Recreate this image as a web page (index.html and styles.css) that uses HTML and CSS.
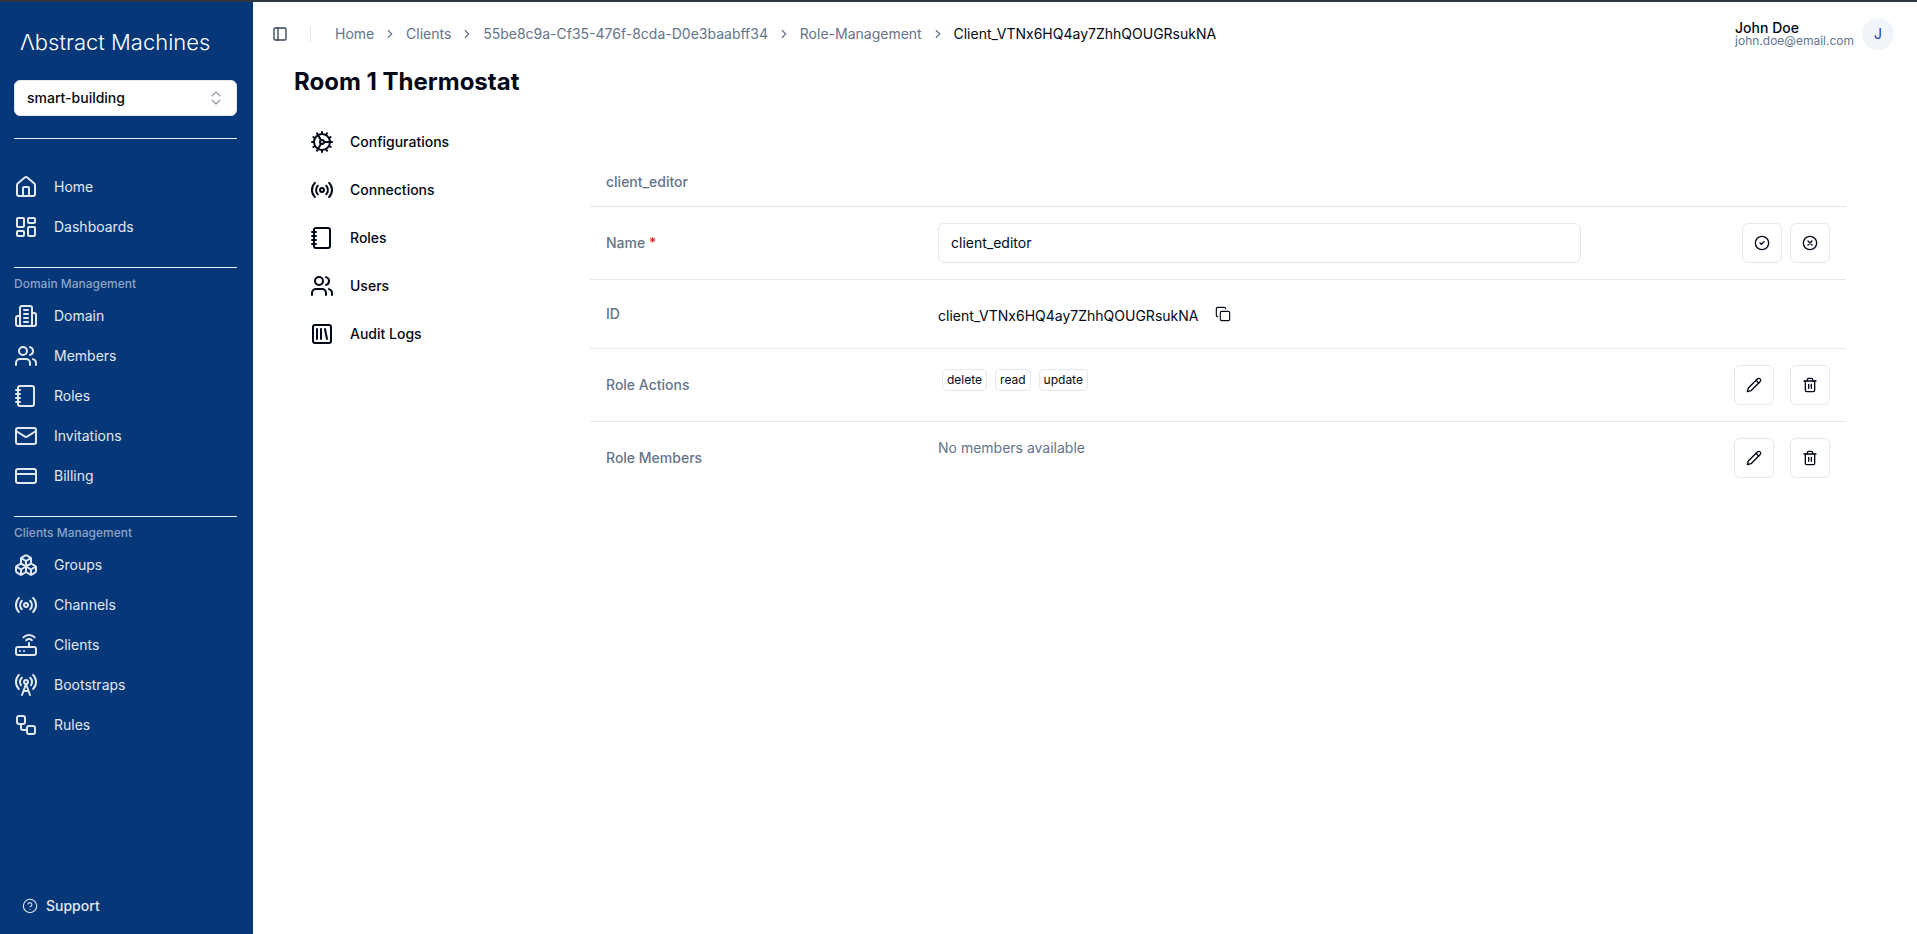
FILE: index.html
```html
<!DOCTYPE html>
<html lang="en">

<head>
  <meta charset="utf-8">
  <title>Room 1 Thermostat</title>
  <link rel="stylesheet" href="styles.css">
</head>

<body>
  <svg class="sprite">
    <symbol id="home" viewBox="0 0 24 24">
      <path d="M15 21v-8a1 1 0 0 0-1-1h-4a1 1 0 0 0-1 1v8" />
      <path d="M3 10a2 2 0 0 1 .709-1.528l7-5.999a2 2 0 0 1 2.582 0l7 5.999A2 2 0 0 1 21 10v9a2 2 0 0 1-2 2H5a2 2 0 0 1-2-2z" />
    </symbol>
    <symbol id="dashboard" viewBox="0 0 24 24">
      <rect x="3" y="3" width="7" height="9" rx="1" />
      <rect x="14" y="3" width="7" height="5" rx="1" />
      <rect x="14" y="12" width="7" height="9" rx="1" />
      <rect x="3" y="16" width="7" height="5" rx="1" />
    </symbol>
    <symbol id="building" viewBox="0 0 24 24">
      <path d="M6 22V4a2 2 0 0 1 2-2h8a2 2 0 0 1 2 2v18Z" />
      <path d="M6 12H4a2 2 0 0 0-2 2v6a2 2 0 0 0 2 2h2" />
      <path d="M18 9h2a2 2 0 0 1 2 2v9a2 2 0 0 1-2 2h-2" />
      <path d="M10 6h4M10 10h4M10 14h4M10 18h4" />
    </symbol>
    <symbol id="users" viewBox="0 0 24 24">
      <path d="M16 21v-2a4 4 0 0 0-4-4H6a4 4 0 0 0-4 4v2" />
      <circle cx="9" cy="7" r="4" />
      <path d="M22 21v-2a4 4 0 0 0-3-3.87" />
      <path d="M16 3.13a4 4 0 0 1 0 7.75" />
    </symbol>
    <symbol id="notebook" viewBox="0 0 24 24">
      <path d="M2 6h4M2 10h4M2 14h4M2 18h4" />
      <rect x="4" y="2" width="16" height="20" rx="2" />
    </symbol>
    <symbol id="mail" viewBox="0 0 24 24">
      <rect x="2" y="4" width="20" height="16" rx="2" />
      <path d="m22 7-8.97 5.7a1.94 1.94 0 0 1-2.06 0L2 7" />
    </symbol>
    <symbol id="card" viewBox="0 0 24 24">
      <rect x="2" y="5" width="20" height="14" rx="2" />
      <path d="M2 10h20" />
    </symbol>
    <symbol id="boxes" viewBox="0 0 24 24">
      <path d="M2.97 12.92A2 2 0 0 0 2 14.63v3.24a2 2 0 0 0 .97 1.71l3 1.8a2 2 0 0 0 2.06 0L12 19v-5.5l-5-3-4.03 2.42Z" />
      <path d="m7 16.5-4.74-2.85M7 16.5l5-3M7 16.5v5.17" />
      <path d="M12 13.5V19l3.97 2.38a2 2 0 0 0 2.06 0l3-1.8a2 2 0 0 0 .97-1.71v-3.24a2 2 0 0 0-.97-1.71L17 10.5l-5 3Z" />
      <path d="m17 16.5-5-3M17 16.5l4.74-2.85M17 16.5v5.17" />
      <path d="M7.97 4.42A2 2 0 0 0 7 6.13v4.37l5 3 5-3V6.13a2 2 0 0 0-.97-1.71l-3-1.8a2 2 0 0 0-2.06 0l-3 1.8Z" />
      <path d="M12 8 7.26 5.15M12 8l4.74-2.85M12 13.5V8" />
    </symbol>
    <symbol id="radio" viewBox="0 0 24 24">
      <path d="M4.9 19.1C1 15.2 1 8.8 4.9 4.9" />
      <path d="M7.8 16.2c-2.3-2.3-2.3-6.1 0-8.5" />
      <circle cx="12" cy="12" r="2" />
      <path d="M16.2 7.8c2.3 2.3 2.3 6.1 0 8.5" />
      <path d="M19.1 4.9C23 8.8 23 15.1 19.1 19" />
    </symbol>
    <symbol id="router" viewBox="0 0 24 24">
      <rect x="2" y="14" width="20" height="8" rx="2" />
      <path d="M6.01 18H6M10.01 18H10M15 10v4" />
      <path d="M17.84 7.17a4 4 0 0 0-5.66 0" />
      <path d="M20.66 4.34a8 8 0 0 0-11.31 0" />
    </symbol>
    <symbol id="tower" viewBox="0 0 24 24">
      <path d="M4.9 16.1C1 12.2 1 5.8 4.9 1.9" />
      <path d="M7.8 4.7a6.14 6.14 0 0 0-.8 7.5" />
      <circle cx="12" cy="9" r="2" />
      <path d="M16.2 4.8c2 2 2.26 5.11.8 7.47" />
      <path d="M19.1 1.9a9.96 9.96 0 0 1 0 14.1" />
      <path d="M9.5 18h5M8 22l4-11 4 11" />
    </symbol>
    <symbol id="workflow" viewBox="0 0 24 24">
      <rect x="3" y="3" width="8" height="8" rx="2" />
      <path d="M7 11v4a2 2 0 0 0 2 2h4" />
      <rect x="13" y="13" width="8" height="8" rx="2" />
    </symbol>
    <symbol id="help" viewBox="0 0 24 24">
      <circle cx="12" cy="12" r="10" />
      <path d="M9.09 9a3 3 0 0 1 5.83 1c0 2-3 3-3 3M12 17h.01" />
    </symbol>
    <symbol id="panel" viewBox="0 0 24 24">
      <rect x="3" y="3" width="18" height="18" rx="2" />
      <path d="M9 3v18" />
    </symbol>
    <symbol id="chevron" viewBox="0 0 24 24">
      <path d="m9 18 6-6-6-6" />
    </symbol>
    <symbol id="updown" viewBox="0 0 24 24">
      <path d="m7 15 5 5 5-5M7 9l5-5 5 5" />
    </symbol>
    <symbol id="cog" viewBox="0 0 24 24">
      <path d="M12 20a8 8 0 1 0 0-16 8 8 0 0 0 0 16Z" />
      <path d="M12 14a2 2 0 1 0 0-4 2 2 0 0 0 0 4Z" />
      <path d="M12 2v2M12 22v-2M17 20.66l-1-1.73M11 10.27 7 3.34M20.66 17l-1.73-1M3.34 7l1.73 1M14 12h8M2 12h2M20.66 7l-1.73 1M3.34 17l1.73-1M17 3.34l-1 1.73M11 13.73l-4 6.93" />
    </symbol>
    <symbol id="library" viewBox="0 0 24 24">
      <rect x="3" y="3" width="18" height="18" rx="2" />
      <path d="M7 7v10M11 7v10M15 7l2 10" />
    </symbol>
    <symbol id="check" viewBox="0 0 24 24">
      <circle cx="12" cy="12" r="10" />
      <path d="m9 12 2 2 4-4" />
    </symbol>
    <symbol id="cancel" viewBox="0 0 24 24">
      <circle cx="12" cy="12" r="10" />
      <path d="m15 9-6 6M9 9l6 6" />
    </symbol>
    <symbol id="pencil" viewBox="0 0 24 24">
      <path d="M17 3a2.85 2.83 0 1 1 4 4L7.5 20.5 2 22l1.5-5.5Z" />
      <path d="m15 5 4 4" />
    </symbol>
    <symbol id="trash" viewBox="0 0 24 24">
      <path d="M3 6h18" />
      <path d="M19 6v14c0 1-1 2-2 2H7c-1 0-2-1-2-2V6" />
      <path d="M8 6V4c0-1 1-2 2-2h4c1 0 2 1 2 2v2" />
      <path d="M10 11v6M14 11v6" />
    </symbol>
    <symbol id="copy" viewBox="0 0 24 24">
      <rect x="8" y="8" width="14" height="14" rx="2" />
      <path d="M4 16c-1.1 0-2-.9-2-2V4c0-1.1.9-2 2-2h10c1.1 0 2 .9 2 2" />
    </symbol>
  </svg>

  <div class="app">
    <aside class="sidebar">
      <div class="logo">Λbstract Machines</div>

      <button class="domain-select">
        <span class="domain-name">smart-building</span>
        <svg class="icon icon-updown"><use href="#updown"></use></svg>
      </button>

      <hr class="side-line line-top">

      <nav class="side-group">
        <a class="side-item"><svg class="icon"><use href="#home"></use></svg>Home</a>
        <a class="side-item"><svg class="icon"><use href="#dashboard"></use></svg>Dashboards</a>
      </nav>

      <hr class="side-line">
      <div class="side-label">Domain Management</div>
      <nav class="side-group">
        <a class="side-item"><svg class="icon"><use href="#building"></use></svg>Domain</a>
        <a class="side-item"><svg class="icon"><use href="#users"></use></svg>Members</a>
        <a class="side-item"><svg class="icon"><use href="#notebook"></use></svg>Roles</a>
        <a class="side-item"><svg class="icon"><use href="#mail"></use></svg>Invitations</a>
        <a class="side-item"><svg class="icon"><use href="#card"></use></svg>Billing</a>
      </nav>

      <hr class="side-line">
      <div class="side-label">Clients Management</div>
      <nav class="side-group">
        <a class="side-item"><svg class="icon"><use href="#boxes"></use></svg>Groups</a>
        <a class="side-item"><svg class="icon"><use href="#radio"></use></svg>Channels</a>
        <a class="side-item"><svg class="icon"><use href="#router"></use></svg>Clients</a>
        <a class="side-item"><svg class="icon"><use href="#tower"></use></svg>Bootstraps</a>
        <a class="side-item"><svg class="icon"><use href="#workflow"></use></svg>Rules</a>
      </nav>

      <a class="support"><svg class="icon icon-help"><use href="#help"></use></svg>Support</a>
    </aside>

    <main class="main">
      <header class="topbar">
        <svg class="icon icon-panel"><use href="#panel"></use></svg>
        <span class="top-divider"></span>
        <ol class="crumbs">
          <li>Home</li>
          <li class="crumb-sep"><svg class="icon"><use href="#chevron"></use></svg></li>
          <li>Clients</li>
          <li class="crumb-sep"><svg class="icon"><use href="#chevron"></use></svg></li>
          <li>55be8c9a-Cf35-476f-8cda-D0e3baabff34</li>
          <li class="crumb-sep"><svg class="icon"><use href="#chevron"></use></svg></li>
          <li>Role-Management</li>
          <li class="crumb-sep"><svg class="icon"><use href="#chevron"></use></svg></li>
          <li class="crumb-current">Client_VTNx6HQ4ay7ZhhQOUGRsukNA</li>
        </ol>
        <div class="user">
          <div class="user-text">
            <div class="user-name">John Doe</div>
            <div class="user-mail">john.doe@email.com</div>
          </div>
          <div class="avatar">J</div>
        </div>
      </header>

      <h1 class="page-title">Room 1 Thermostat</h1>

      <div class="content">
        <nav class="tabs">
          <a class="tab"><svg class="icon"><use href="#cog"></use></svg>Configurations</a>
          <a class="tab"><svg class="icon"><use href="#radio"></use></svg>Connections</a>
          <a class="tab"><svg class="icon"><use href="#notebook"></use></svg>Roles</a>
          <a class="tab"><svg class="icon"><use href="#users"></use></svg>Users</a>
          <a class="tab"><svg class="icon"><use href="#library"></use></svg>Audit Logs</a>
        </nav>

        <section class="role">
          <div class="role-head">client_editor</div>

          <div class="role-row">
            <div class="role-label">Name <span class="required">*</span></div>
            <div class="role-value"><input class="text-input" value="client_editor"></div>
            <div class="role-actions actions-tight">
              <button class="icon-btn"><svg class="icon"><use href="#check"></use></svg></button>
              <button class="icon-btn"><svg class="icon"><use href="#cancel"></use></svg></button>
            </div>
          </div>

          <div class="role-row">
            <div class="role-label">ID</div>
            <div class="role-value id-value">
              <span class="id-text">client_VTNx6HQ4ay7ZhhQOUGRsukNA</span>
              <svg class="icon icon-copy"><use href="#copy"></use></svg>
            </div>
            <div class="role-actions"></div>
          </div>

          <div class="role-row">
            <div class="role-label">Role Actions</div>
            <div class="role-value badges">
              <span class="badge">delete</span>
              <span class="badge">read</span>
              <span class="badge">update</span>
            </div>
            <div class="role-actions">
              <button class="icon-btn"><svg class="icon"><use href="#pencil"></use></svg></button>
              <button class="icon-btn"><svg class="icon"><use href="#trash"></use></svg></button>
            </div>
          </div>

          <div class="role-row">
            <div class="role-label">Role Members</div>
            <div class="role-value empty">No members available</div>
            <div class="role-actions">
              <button class="icon-btn"><svg class="icon"><use href="#pencil"></use></svg></button>
              <button class="icon-btn"><svg class="icon"><use href="#trash"></use></svg></button>
            </div>
          </div>
        </section>
      </div>
    </main>
  </div>
</body>

</html>
```

FILE: styles.css
```css
* {
  box-sizing: border-box;
  margin: 0;
  padding: 0;
}

html,
body {
  height: 100%;
}

body {
  background: #fff;
  color: #020817;
  font-family: Inter, "Liberation Sans", sans-serif;
  font-size: 14px;
  line-height: 20px;
  overflow: hidden;
}

.sprite {
  display: none;
}

.icon {
  display: block;
  flex: none;
  width: 24px;
  height: 24px;
  fill: none;
  stroke: currentColor;
  stroke-width: 2;
  stroke-linecap: round;
  stroke-linejoin: round;
}

.app {
  display: flex;
  height: 100%;
  border-top: 2px solid #2f3640;
}

/* sidebar */
.sidebar {
  display: flex;
  flex-direction: column;
  flex: none;
  width: 253px;
  padding: 0 16px 8px 14px;
  background: #063778;
  color: #e2e8f0;
}

.logo {
  height: 78px;
  padding: 26px 0 0 6px;
  color: #fff;
  font-size: 22px;
  font-weight: 300;
  line-height: 28px;
  white-space: nowrap;
}

.domain-select {
  display: flex;
  align-items: center;
  justify-content: space-between;
  flex: none;
  height: 36px;
  padding: 0 11px 0 12px;
  border: 1px solid #e2e8f0;
  border-radius: 6px;
  background: #fff;
  color: #020817;
  font: 500 14px Inter, sans-serif;
}

.domain-name {
  padding-bottom: 2px;
}

.icon-updown {
  width: 18px;
  height: 18px;
  color: #8a93a3;
  stroke-width: 1.5;
}

.side-line {
  flex: none;
  height: 1px;
  margin-top: 20px;
  border: 0;
  background: #e8eef6;
}

.line-top {
  margin-top: 22px;
  margin-bottom: 28px;
}

.side-label {
  margin-top: 8px;
  margin-bottom: 4px;
  color: #8ba3c6;
  font-size: 12px;
  font-weight: 500;
  line-height: 16px;
}

.side-item {
  display: flex;
  align-items: center;
  gap: 16px;
  height: 40px;
}

.support {
  display: flex;
  align-items: center;
  gap: 8px;
  margin-top: auto;
  padding: 10px 0 10px 8px;
  font-weight: 500;
}

.icon-help {
  width: 16px;
  height: 16px;
  stroke-width: 1.6;
}

/* header */
.main {
  flex: 1;
  min-width: 0;
}

.topbar {
  display: flex;
  align-items: center;
  height: 64px;
  padding: 0 23px 0 19px;
}

.icon-panel {
  width: 16px;
  height: 16px;
  color: #334155;
}

.top-divider {
  width: 1px;
  height: 16px;
  margin: 0 24px 0 22px;
  background: #e2e8f0;
}

.crumbs {
  display: flex;
  align-items: center;
  gap: 8.92px;
  list-style: none;
  color: #64748b;
}

.crumb-sep .icon {
  width: 14px;
  height: 14px;
}

.crumb-current {
  color: #020817;
}

.user {
  display: flex;
  align-items: center;
  gap: 8px;
  margin-left: auto;
}

.user-text {
  line-height: 13px;
}

.user-name {
  font-weight: 500;
}

.user-mail {
  color: #64748b;
  font-size: 12px;
}

.avatar {
  display: flex;
  align-items: center;
  justify-content: center;
  width: 32px;
  height: 32px;
  border-radius: 50%;
  background: #f1f5f9;
  color: #1e40af;
}

/* page */
.page-title {
  padding-left: 41px;
  font-size: 24px;
  font-weight: 700;
  line-height: 32px;
}

.content {
  display: flex;
  align-items: flex-start;
  padding: 20px 71px 0 57px;
}

.tabs {
  flex: none;
  width: 280px;
}

.tab {
  display: flex;
  align-items: center;
  gap: 16px;
  height: 48px;
  font-weight: 500;
}

.role {
  flex: 1;
  margin-top: 40px;
}

.role-head {
  height: 49px;
  padding: 14px 16px;
  border-bottom: 1px solid #e2e8f0;
  color: #64748b;
  font-weight: 500;
}

.role-row {
  display: grid;
  grid-template-columns: 348px 1fr auto;
  align-items: center;
  padding: 16px;
  padding-left: 0;
  border-bottom: 1px solid #e2e8f0;
}

.role-row:last-child {
  border-bottom: 0;
}

.role-label {
  padding-left: 16px;
  color: #64748b;
  font-weight: 500;
}

.required {
  color: #dc2626;
}

.role-value {
  align-self: start;
}

.text-input {
  display: block;
  width: 643px;
  height: 40px;
  padding: 0 12px 2px;
  border: 1px solid #e2e8f0;
  border-radius: 6px;
  background: #fff;
  color: #020817;
  font: 14px Inter, sans-serif;
}

.id-value {
  display: flex;
  align-items: center;
  gap: 17px;
  height: 36px;
}

.id-text {
  padding-top: 4px;
}

.icon-copy {
  width: 16px;
  height: 16px;
  stroke-width: 1.7;
}

.badges {
  display: flex;
  gap: 8px;
  padding: 4px 0 0 4px;
}

.badge {
  height: 22px;
  padding: 0 4px;
  border: 1px solid #e2e8f0;
  border-radius: 5px;
  font-size: 12px;
  line-height: 20px;
}

.empty {
  color: #64748b;
}

.role-actions {
  display: flex;
  gap: 16px;
}

.actions-tight {
  gap: 8px;
}

.icon-btn {
  display: flex;
  align-items: center;
  justify-content: center;
  width: 40px;
  height: 40px;
  border: 1px solid #e2e8f0;
  border-radius: 6px;
  background: #fff;
  color: #020817;
}

.icon-btn .icon {
  width: 16px;
  height: 16px;
}
```
